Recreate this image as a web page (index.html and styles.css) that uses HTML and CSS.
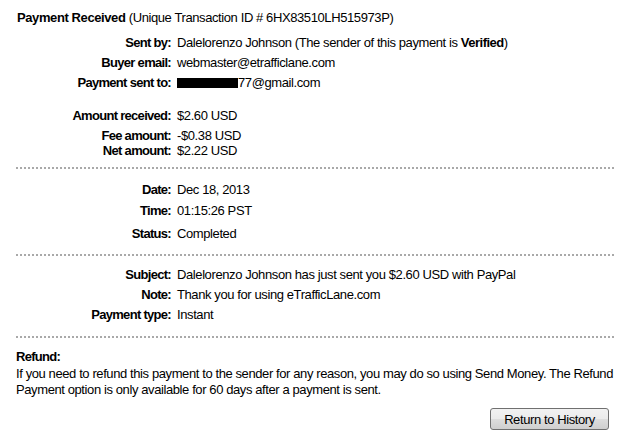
FILE: index.html
```html
<!DOCTYPE html>
<html>
<head>
<meta charset="utf-8">
<link rel="stylesheet" href="styles.css">
</head>
<body>
<div class="page">
  <div class="title"><b>Payment Received</b> (Unique Transaction ID # 6HX83510LH515973P)</div>

  <div class="grid g1">
    <div class="lbl">Sent by:</div><div class="val">Dalelorenzo Johnson (The sender of this payment is <b>Verified</b>)</div>
    <div class="lbl r2">Buyer email:</div><div class="val r2">webmaster@etrafficlane.com</div>
    <div class="lbl r2">Payment sent to:</div><div class="val r2"><span class="redact"></span>77@gmail.com</div>
  </div>

  <div class="grid g2">
    <div class="lbl">Amount received:</div><div class="val">$2.60 USD</div>
    <div class="lbl r2">Fee amount:</div><div class="val r2">-$0.38 USD</div>
    <div class="lbl r3">Net amount:</div><div class="val r3">$2.22 USD</div>
  </div>

  <div class="dots d1"></div>

  <div class="grid g3">
    <div class="lbl">Date:</div><div class="val">Dec 18, 2013</div>
    <div class="lbl r4">Time:</div><div class="val r4">01:15:26 PST</div>
    <div class="lbl r5">Status:</div><div class="val r5">Completed</div>
  </div>

  <div class="dots d2"></div>

  <div class="grid g4">
    <div class="lbl">Subject:</div><div class="val">Dalelorenzo Johnson has just sent you $2.60 USD with PayPal</div>
    <div class="lbl r2">Note:</div><div class="val r2">Thank you for using eTrafficLane.com</div>
    <div class="lbl r2">Payment type:</div><div class="val r2">Instant</div>
  </div>

  <div class="dots d3"></div>

  <div class="refund">
    <div class="refund-title">Refund:</div>
    <p class="refund-text">If you need to refund this payment to the sender for any reason, you may do so using Send Money. The Refund Payment option is only available for 60 days after a payment is sent.</p>
  </div>

  <div class="actions">
    <button class="btn" type="button">Return to History</button>
  </div>
</div>
</body>
</html>
```

FILE: styles.css
```css
html, body {
  margin: 0;
  padding: 0;
  background: #ffffff;
}

body {
  font-family: "Liberation Sans", Arial, sans-serif;
  font-size: 13px;
  line-height: 16px;
  letter-spacing: -0.4px;
  color: #000000;
}

.page {
  width: 600px;
  padding: 10px 0 0 16px;
}

.title {
  padding-left: 1px;
}

.grid {
  display: grid;
  grid-template-columns: 155px 1fr;
  column-gap: 6px;
}

.lbl {
  font-weight: bold;
  text-align: right;
  letter-spacing: -0.7px;
}

.val b {
  letter-spacing: -0.5px;
}

.g1 { margin-top: 9px; }
.g2 { margin-top: 17px; }
.g3 { margin-top: 13px; }
.g4 { margin-top: 11px; }

.r2 { margin-top: 4px; }
.r3 { margin-top: -1px; }
.r4 { margin-top: 5px; }
.r5 { margin-top: 7px; }

.redact {
  display: inline-block;
  width: 61px;
  height: 10px;
  background: #000000;
  vertical-align: -1px;
}

.dots {
  height: 2px;
  background-image: repeating-linear-gradient(to right, #a9a9a9 0, #a9a9a9 2px, transparent 2px, transparent 4px);
}

.d1 { margin-top: 8px; }
.d2 { margin-top: 12px; }
.d3 { margin-top: 13px; }

.refund {
  margin-top: 11px;
}

.refund-title {
  font-weight: bold;
  letter-spacing: -0.7px;
}

.refund-text {
  margin: 1px 0 0 0;
}

.actions {
  display: flex;
  justify-content: flex-end;
  margin-top: 10px;
  padding-right: 7px;
}

.btn {
  font-family: "Liberation Sans", Arial, sans-serif;
  font-size: 13px;
  letter-spacing: -0.4px;
  color: #000000;
  width: 119px;
  height: 22px;
  padding: 0;
  border: 1px solid #707070;
  border-radius: 3px;
  background: linear-gradient(to bottom, #f2f2f2 0%, #ebebeb 50%, #dddddd 51%, #cfcfcf 100%);
}
```
